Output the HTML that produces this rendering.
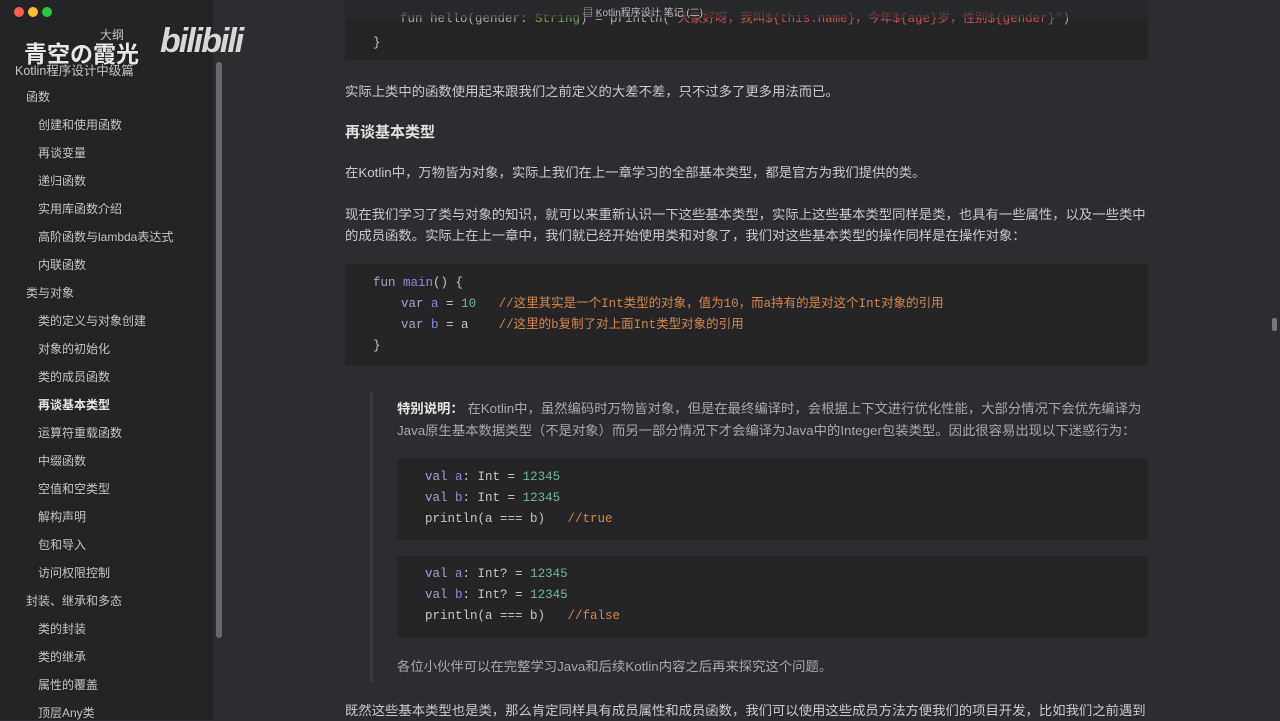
<!DOCTYPE html>
<html><head><meta charset="utf-8"><style>
*{margin:0;padding:0;box-sizing:border-box}
body{width:1280px;height:720px;overflow:hidden;background:#2c2d31;font-family:"Liberation Sans","Noto Sans CJK SC",sans-serif;color:#c9c9cc;position:relative}
.side{position:absolute;left:0;top:0;width:213px;height:720px;background:#242427}
.sb{position:absolute;left:216px;top:62px;width:6px;height:576px;background:#6a6a6e;border-radius:3px}
.side div{position:absolute;font-size:12px;color:#c4c4c7;white-space:nowrap}
.l1{left:26px}.l2{left:38px}
.t{position:absolute;font-size:13.35px;color:#c9c9cc;white-space:nowrap;line-height:18px;margin-top:2px}
.code{position:absolute;background:#252528;font-family:"Liberation Mono","Noto Sans CJK SC",monospace;font-size:12.5px;color:#c6c6c9}
.code div{position:absolute;white-space:pre;line-height:14px}
.k{color:#b39ccf}.v{color:#8a8ad8}.n{color:#6fb59a}.c{color:#d4874a}.s{color:#6ea84a}.r{color:#c9504a}
</style></head><body>
<div class="side">
<div style="left:24px;top:35px;font-size:23px;font-weight:bold;color:#e8e8e8">青空の霞光</div>
<div style="left:100px;top:26px;font-size:12px">大纲</div>
<div style="left:160px;top:22px;font-size:34px;font-weight:bold;font-style:italic;color:#d8d8d8;letter-spacing:-2px">bilibili</div>
<div style="left:15px;top:60px;font-size:12.5px">Kotlin程序设计中级篇</div>
<div class="l1" style="top:88px">函数</div>
<div class="l2" style="top:116px">创建和使用函数</div>
<div class="l2" style="top:144px">再谈变量</div>
<div class="l2" style="top:172px">递归函数</div>
<div class="l2" style="top:200px">实用库函数介绍</div>
<div class="l2" style="top:228px">高阶函数与lambda表达式</div>
<div class="l2" style="top:256px">内联函数</div>
<div class="l1" style="top:284px">类与对象</div>
<div class="l2" style="top:312px">类的定义与对象创建</div>
<div class="l2" style="top:340px">对象的初始化</div>
<div class="l2" style="top:368px">类的成员函数</div>
<div class="l2" style="top:396px;font-weight:bold;color:#e6e6e6">再谈基本类型</div>
<div class="l2" style="top:424px">运算符重载函数</div>
<div class="l2" style="top:452px">中缀函数</div>
<div class="l2" style="top:480px">空值和空类型</div>
<div class="l2" style="top:508px">解构声明</div>
<div class="l2" style="top:536px">包和导入</div>
<div class="l2" style="top:564px">访问权限控制</div>
<div class="l1" style="top:592px">封装、继承和多态</div>
<div class="l2" style="top:620px">类的封装</div>
<div class="l2" style="top:648px">类的继承</div>
<div class="l2" style="top:676px">属性的覆盖</div>
<div class="l2" style="top:704px">顶层Any类</div>
</div>
<div class="sb"></div>
<div style="position:absolute;left:1272px;top:318px;width:5px;height:13px;background:#77777b;border-radius:2px"></div>
<div class="code" style="left:345px;top:0;width:803px;height:60px">
<div style="left:55px;top:12px;color:#aaa">fun hello(gender: <span class="s">String</span>) = println(<span class="r">"大家好呀，我叫${this.name}，今年${age}岁，性别${gender}"</span>)</div>
<div style="left:28px;top:36px">}</div>
</div>
<div style="position:absolute;left:213px;top:0;width:1067px;height:18px;background:rgba(44,45,49,0.6)"></div>
<div style="position:absolute;left:14px;top:7px;width:10px;height:10px;border-radius:5px;background:#fe5f57"></div>
<div style="position:absolute;left:28px;top:7px;width:10px;height:10px;border-radius:5px;background:#febc2e"></div>
<div style="position:absolute;left:42px;top:7px;width:10px;height:10px;border-radius:5px;background:#28c840"></div>
<div style="position:absolute;left:583px;top:4px;font-size:10px;color:#bbb">▤ Kotlin程序设计 笔记 (二)</div>
<div class="t" style="left:345px;top:81px">实际上类中的函数使用起来跟我们之前定义的大差不差，只不过多了更多用法而已。</div>
<div class="t" style="left:345px;top:122px;font-size:15px;font-weight:bold;color:#e0e0e0">再谈基本类型</div>
<div class="t" style="left:345px;top:162px">在Kotlin中，万物皆为对象，实际上我们在上一章学习的全部基本类型，都是官方为我们提供的类。</div>
<div class="t" style="left:345px;top:204px">现在我们学习了类与对象的知识，就可以来重新认识一下这些基本类型，实际上这些基本类型同样是类，也具有一些属性，以及一些类中</div>
<div class="t" style="left:345px;top:225px">的成员函数。实际上在上一章中，我们就已经开始使用类和对象了，我们对这些基本类型的操作同样是在操作对象：</div>
<div class="code" style="left:345px;top:264px;width:803px;height:101px">
<div style="left:28px;top:12px"><span class="k">fun</span> <span class="v">main</span>() {</div>
<div style="left:56px;top:33px"><span class="k">var</span> <span class="v">a</span> = <span class="n">10</span>   <span class="c">//这里其实是一个Int类型的对象，值为10，而a持有的是对这个Int对象的引用</span></div>
<div style="left:56px;top:54px"><span class="k">var</span> <span class="v">b</span> = a    <span class="c">//这里的b复制了对上面Int类型对象的引用</span></div>
<div style="left:28px;top:75px">}</div>
</div>
<div style="position:absolute;left:370px;top:392px;width:3px;height:290px;background:#3a3b40"></div>
<div class="t" style="left:397px;top:398px;color:#a8a8ab"><b style="color:#e6e6e6">特别说明：</b> 在Kotlin中，虽然编码时万物皆对象，但是在最终编译时，会根据上下文进行优化性能，大部分情况下会优先编译为</div>
<div class="t" style="left:397px;top:420px;color:#a8a8ab">Java原生基本数据类型（不是对象）而另一部分情况下才会编译为Java中的Integer包装类型。因此很容易出现以下迷惑行为：</div>
<div class="code" style="left:397px;top:459px;width:751px;height:81px">
<div style="left:28px;top:11px"><span class="k">val</span> <span class="v">a</span>: Int = <span class="n">12345</span></div>
<div style="left:28px;top:32px"><span class="k">val</span> <span class="v">b</span>: Int = <span class="n">12345</span></div>
<div style="left:28px;top:53px">println(a === b)   <span class="c">//true</span></div>
</div>
<div class="code" style="left:397px;top:556px;width:751px;height:81px">
<div style="left:28px;top:11px"><span class="k">val</span> <span class="v">a</span>: Int? = <span class="n">12345</span></div>
<div style="left:28px;top:32px"><span class="k">val</span> <span class="v">b</span>: Int? = <span class="n">12345</span></div>
<div style="left:28px;top:53px">println(a === b)   <span class="c">//false</span></div>
</div>
<div class="t" style="left:397px;top:656px;color:#a8a8ab">各位小伙伴可以在完整学习Java和后续Kotlin内容之后再来探究这个问题。</div>
<div class="t" style="left:345px;top:700px">既然这些基本类型也是类，那么肯定同样具有成员属性和成员函数，我们可以使用这些成员方法方便我们的项目开发，比如我们之前遇到</div>
</body></html>
